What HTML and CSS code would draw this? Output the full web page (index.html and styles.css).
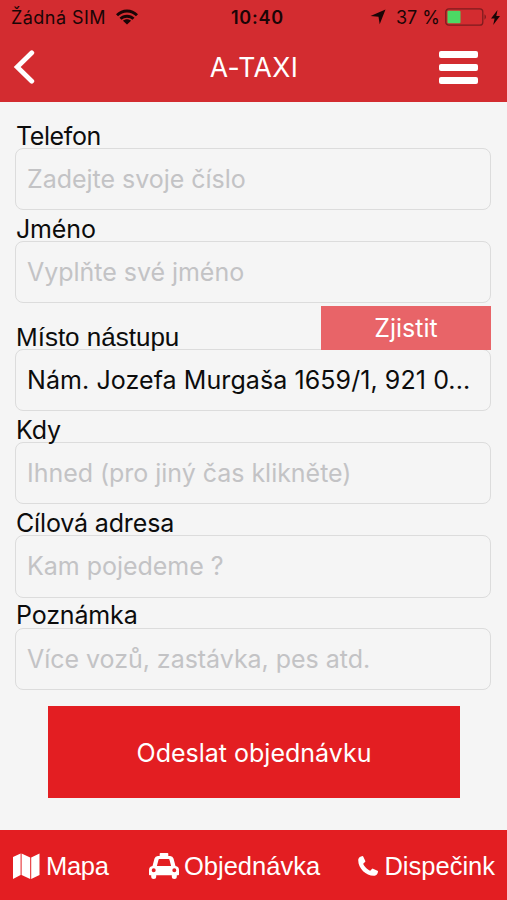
FILE: index.html
```html
<!DOCTYPE html>
<html lang="cs">
<head>
<meta charset="utf-8">
<title>A-TAXI</title>
<link rel="stylesheet" href="styles.css">
</head>
<body>
<header class="header">
  <div class="status">
    <div class="status-left">
      <span class="carrier">Žádná SIM</span>
      <svg class="wifi" viewBox="0 0 22 16" width="22" height="16"><g fill="none" stroke="#1a0506" stroke-width="2.900"><path d="M1 6.200C6.500.5 15.500.5 21 6.200"/><path d="M4.500 9.800c3.500-3.500 9.500-3.500 13 0"/></g><path d="M11 15.500 7 11.700c2.200-2 5.800-2 8 0z" fill="#1a0506"/></svg>
    </div>
    <span class="clock">10:40</span>
    <div class="status-right">
      <svg class="arrow" viewBox="0 0 16 16" width="16" height="16"><path d="M15.500.5 9.700 15.200 8.500 7.700.5 7z" fill="#1a0506"/></svg>
      <span class="percent">37 %</span>
      <svg class="battery" viewBox="0 0 42 18" width="42" height="18"><rect x=".8" y=".8" width="37" height="16.400" rx="3" fill="none" stroke="#7f1b1e" stroke-width="1.300"/><rect x="2.500" y="2.800" width="13" height="12.400" rx="1" fill="#4cd964"/><path d="M39.500 6.300q3 2.700 0 5.400z" fill="#7f1b1e"/></svg>
      <svg class="bolt" viewBox="0 0 9 15" width="9" height="15"><path d="M6.500 0 0 8.500h3.600L2.200 15 9 6H5.300z" fill="#1a0506"/></svg>
    </div>
  </div>
  <nav class="navbar">
    <svg class="back" viewBox="0 0 22 34" width="22" height="34"><path d="M18.800 2.800 4.200 17 18.800 31.200" fill="none" stroke="#fff" stroke-width="4.800" stroke-linecap="round" stroke-linejoin="miter"/></svg>
    <h1 class="title">A-TAXI</h1>
    <div class="menu"><i></i><i></i><i></i></div>
  </nav>
</header>
<main class="form">
  <div class="label-row"><span class="label l-phone">Telefon</span></div>
  <div class="field"><span class="hint">Zadejte svoje číslo</span></div>
  <div class="label-row"><span class="label">Jméno</span></div>
  <div class="field"><span class="hint">Vyplňte své jméno</span></div>
  <div class="label-row tall"><span class="label l-place">Místo nástupu</span><button class="detect"><span>Zjistit</span></button></div>
  <div class="field"><span class="hint value">Nám. Jozefa Murgaša 1659/1, 921 0...</span></div>
  <div class="label-row"><span class="label">Kdy</span></div>
  <div class="field"><span class="hint">Ihned (pro jiný čas klikněte)</span></div>
  <div class="label-row"><span class="label">Cílová adresa</span></div>
  <div class="field"><span class="hint">Kam pojedeme ?</span></div>
  <div class="label-row short"><span class="label">Poznámka</span></div>
  <div class="field"><span class="hint">Více vozů, zastávka, pes atd.</span></div>
  <button class="submit"><span>Odeslat objednávku</span></button>
</main>
<footer class="tabs">
  <div class="tab tab-map">
    <svg viewBox="0 0 27 27" width="27" height="27"><path d="M0 4 7.600.5V22L0 26zM8.600.5l8.600 4V26L8.600 22zM18.200 4.500 26.500.5V22l-8.300 4z" fill="#fff"/></svg>
    <span>Mapa</span>
  </div>
  <div class="tab tab-order">
    <svg viewBox="0 0 30 26" width="30" height="26"><path fill="#fff" fill-rule="evenodd" d="M11.500 0h7q.8 0 .8.800V3h1.900q2.500 0 3.300 2.500l2 7.500q3.500.5 3.500 4v4.500q0 .7-.8.700h-1.400v1.200a2.500 2.500 0 0 1-5 0v-1.200H7.200v1.200a2.500 2.500 0 0 1-5 0v-1.200H.8q-.8 0-.8-.700V17q0-3.500 3.500-4l2-7.500Q6.300 3 8.800 3h1.900V.8q0-.8.800-.8zM9.600 6.400 7.900 13h14.200l-1.700-6.600q-.1-.4-.6-.4h-9.600q-.5 0-.6.400zM4.700 15.300a2 2 0 1 0 0 4 2 2 0 0 0 0-4zm20.600 0a2 2 0 1 0 0 4 2 2 0 0 0 0-4z"/></svg>
    <span>Objednávka</span>
  </div>
  <div class="tab tab-call">
    <svg viewBox="0 0 20 20" width="20" height="20"><path d="M.3 3.300C.8 1.500 2.500.3 4.500 0q.5 0 .7.500L7.300 5q.2.600-.3 1.100L5.200 7.800c.8 2.400 4.300 6 7 7l1.700-1.900q.5-.5 1.100-.2l4.500 2.100q.6.300.5.900c-.3 2-1.600 3.700-3.300 4C8.500 20.500-.5 12 .3 3.300z" fill="#fff"/></svg>
    <span>Dispečink</span>
  </div>
</footer>
</body>
</html>
```
FILE: styles.css
```css
* { box-sizing: border-box; }
body {
  margin: 0;
  width: 507px;
  height: 900px;
  display: flex;
  flex-direction: column;
  overflow: hidden;
  background: #f5f5f5;
  font-family: Inter, "Liberation Sans", sans-serif;
  color: #0c0c0c;
}
span, h1 { white-space: nowrap; }
svg { display: block; flex: none; }
button { border: 0; padding: 0; color: #fff; font: 25px/30px Inter, sans-serif; }

.header { height: 102px; background: #d32c30; flex: none; }
.status {
  height: 34px;
  display: grid;
  grid-template-columns: 1fr auto 1fr;
  align-items: center;
  padding: 0 7px 0 11px;
  color: #1a0506;
  font-size: 18px;
}
.status-left, .status-right { display: flex; align-items: center; }
.status-left { gap: 10px; }
.carrier { letter-spacing: .45px; }
.status-right { justify-content: flex-end; }
.clock { font-weight: 600; letter-spacing: .8px; padding-left: 4px; }
.percent { margin: 0 5px 0 10px; }
.bolt { margin-left: 4px; }
.navbar {
  height: 66px;
  display: grid;
  grid-template-columns: 1fr auto 1fr;
  align-items: center;
  padding: 0 29px 0 13px;
}
.title { margin: 0; padding-left: 17px; font-size: 26.5px; font-weight: 400; letter-spacing: .4px; color: #fff; }
.menu { justify-self: end; display: flex; flex-direction: column; gap: 6px; }
.menu i { width: 39px; height: 7px; border-radius: 2px; background: #fff; }

.form { flex: 1; padding: 14px 16px 0 15px; }
.label-row { height: 31px; display: flex; align-items: flex-end; padding-left: 1px; }
.label-row:first-child { height: 32px; }
.tall { height: 46px; justify-content: space-between; }
.short { height: 30px; }
.label { font-size: 25px; line-height: 30px; margin-bottom: -3px; letter-spacing: -.15px; }
.short .label { margin-bottom: -2px; }
.l-phone { letter-spacing: -.4px; }
.l-place, .tabs { font-family: "Liberation Sans", Arial, sans-serif; }
.l-place { font-size: 26px; letter-spacing: 0; }
.field {
  height: 62px;
  display: flex;
  align-items: center;
  padding-left: 11px;
  border: 1.5px solid #dcdcdc;
  border-radius: 8px;
}
.tall ~ .field { height: 62.2px; }
.hint { font-size: 25px; line-height: 30px; color: #c3c3c5; letter-spacing: -.03px; }
.value { color: #0c0c0c; letter-spacing: .08px; }
.detect { width: 170px; height: 44px; background: #e86468; margin-bottom: -1px; }
.submit { display: block; width: 412px; height: 92px; margin: 16px 0 0 33px; background: #e31e22; }
.submit span { position: relative; top: 1px; }

.tabs {
  height: 70px;
  flex: none;
  display: flex;
  align-items: center;
  justify-content: space-between;
  padding: 2px 12px 0 13px;
  background: #e31e22;
  color: #fff;
  font-size: 25.5px;
}
.tab { display: flex; align-items: center; gap: 6px; }
.tab-map span { letter-spacing: -.3px; }
.tab-order { padding-left: 2px; gap: 5px; }
```
